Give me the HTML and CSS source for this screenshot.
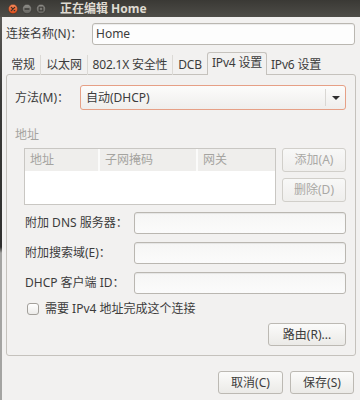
FILE: index.html
```html
<!DOCTYPE html>
<html lang="zh-CN">
<head>
<meta charset="utf-8">
<title>正在编辑 Home</title>
<link rel="stylesheet" href="styles.css">
</head>
<body>
<div class="window">
  <div class="titlebar">
    <div class="wbtns">
      <svg class="wbtn" viewBox="0 0 10 10" width="10" height="10">
        <defs>
          <linearGradient id="gc" x1="0" y1="0" x2="0" y2="1">
            <stop offset="0" stop-color="#f58a5c"/>
            <stop offset="1" stop-color="#dc4a18"/>
          </linearGradient>
          <linearGradient id="gg" x1="0" y1="0" x2="0" y2="1">
            <stop offset="0" stop-color="#8e8d88"/>
            <stop offset="1" stop-color="#65645f"/>
          </linearGradient>
        </defs>
        <circle cx="5" cy="5" r="4.7" fill="url(#gc)" stroke="#3a2a22" stroke-width="0.5"/>
        <path d="M3.3 3.3 L6.7 6.7 M6.7 3.3 L3.3 6.7" stroke="#3c2f28" stroke-width="1.2" stroke-linecap="round"/>
      </svg>
      <svg class="wbtn" viewBox="0 0 10 10" width="10" height="10">
        <circle cx="5" cy="5" r="4.7" fill="url(#gg)" stroke="#2c2b28" stroke-width="0.5"/>
        <path d="M3 5 H7" stroke="#3c3b37" stroke-width="1.3" stroke-linecap="round"/>
      </svg>
      <svg class="wbtn" viewBox="0 0 10 10" width="10" height="10">
        <circle cx="5" cy="5" r="4.7" fill="url(#gg)" stroke="#2c2b28" stroke-width="0.5"/>
        <rect x="3.2" y="3.2" width="3.6" height="3.6" fill="none" stroke="#3c3b37" stroke-width="1.1"/>
      </svg>
    </div>
    <div class="title">正在编辑 Home</div>
  </div>
  <div class="main">
    <div class="edge"></div>
    <div class="content">
      <div class="namerow">
        <span class="namelabel">连接名称(N)：</span>
        <div class="entry namebox">Home</div>
      </div>
      <div class="tabs">
        <div class="tab t-general">常规</div>
        <div class="tab t-ether">以太网</div>
        <div class="tab t-sec">802.1X 安全性</div>
        <div class="tab t-dcb">DCB</div>
        <div class="tab active t-v4">IPv4 设置</div>
        <div class="tab last t-v6">IPv6 设置</div>
      </div>
      <div class="panel">
        <div class="methodrow">
          <span class="methodlabel">方法(M)：</span>
          <div class="combo">
            <span class="combotext">自动(DHCP)</span>
            <span class="combosep"></span>
            <span class="comboarrow"><span class="arrow"></span></span>
          </div>
        </div>
        <div class="section">地址</div>
        <div class="addr">
          <div class="table">
            <div class="thead">
              <span class="th c1">地址</span>
              <span class="th c2">子网掩码</span>
              <span class="th c3">网关</span>
            </div>
          </div>
          <div class="addrbtns">
            <div class="btn disabled">添加(A)</div>
            <div class="btn disabled">删除(D)</div>
          </div>
        </div>
        <div class="form">
          <div class="frow"><span class="flabel">附加 DNS 服务器：</span><div class="entry fentry"></div></div>
          <div class="frow"><span class="flabel">附加搜索域(E)：</span><div class="entry fentry"></div></div>
          <div class="frow"><span class="flabel">DHCP 客户端 ID：</span><div class="entry fentry"></div></div>
        </div>
        <div class="checkrow">
          <span class="check"></span>
          <span class="checklabel">需要 IPv4 地址完成这个连接</span>
        </div>
        <div class="routerow">
          <div class="btn route">路由(R)...</div>
        </div>
      </div>
      <div class="actions">
        <div class="btn cancel">取消(C)</div>
        <div class="btn save">保存(S)</div>
      </div>
    </div>
  </div>
</div>
</body>
</html>
```
FILE: styles.css
```css
html, body {
  margin: 0;
  padding: 0;
}
body {
  background: #f2f1f0;
  font-family: "Noto Sans", "Noto Sans CJK SC", sans-serif;
  font-size: 12px;
  line-height: 16px;
  color: #3c3c3c;
}
.window {
  width: 360px;
  height: 400px;
  overflow: hidden;
  display: flex;
  flex-direction: column;
}
.titlebar {
  height: 17px;
  flex: none;
  display: flex;
  align-items: center;
  background: linear-gradient(#3a3935, #4e4d48);
}
.wbtns {
  display: flex;
  gap: 4px;
  padding-left: 8px;
}
.wbtn {
  display: block;
}
.title {
  margin-left: 14px;
  font-weight: bold;
  color: #dfdbd2;
  white-space: nowrap;
}
.main {
  flex: 1;
  display: flex;
}
.edge {
  width: 2px;
  flex: none;
  background: linear-gradient(to bottom, #5b5a57 0, #3a3a38 80px, #2f2f2e 230px, #a4a4a2 236px, #a4a4a2 100%);
}
.content {
  flex: 1;
  padding: 6px 4px 0 4px;
  display: flex;
  flex-direction: column;
}
.namerow {
  display: flex;
  align-items: center;
  height: 22px;
}
.namelabel {
  width: 86px;
  flex: none;
  white-space: nowrap;
}
.entry {
  height: 22px;
  box-sizing: border-box;
  border: 1px solid #bab7b1;
  border-radius: 3px;
  background: #fdfdfd;
  box-shadow: inset 0 1px 1px rgba(0, 0, 0, 0.07);
  padding: 0 3px;
  display: flex;
  align-items: center;
}
.namebox {
  flex: 1;
  margin-right: 1px;
  color: #3c3c3c;
}
.tabs {
  display: flex;
  align-items: flex-end;
  height: 23px;
  margin-top: 7px;
  position: relative;
  z-index: 1;
}
.tab {
  height: 20px;
  box-sizing: border-box;
  display: flex;
  align-items: center;
  justify-content: center;
  border-right: 1px solid #dcdad6;
  white-space: nowrap;
  letter-spacing: -0.2px;
}
.t-general { width: 35px; }
.t-ether { width: 47px; }
.t-sec { width: 85px; }
.t-dcb { width: 34px; border-right: none; }
.t-v4 { width: 60px; }
.t-v6 { width: 58px; }
.tab.last {
  border-right: none;
}
.tab.active {
  height: 23px;
  border: 1px solid #c5c2bd;
  border-bottom: none;
  border-radius: 3px 3px 0 0;
  background: #f2f1f0;
  padding-bottom: 2px;
}
.panel {
  margin-top: -1px;
  height: 282px;
  box-sizing: border-box;
  border: 1px solid #c5c2bd;
  border-radius: 3px;
  padding: 10px 9px 0 8px;
  display: flex;
  flex-direction: column;
}
.methodrow {
  display: flex;
  align-items: center;
  height: 25px;
}
.methodlabel {
  width: 65px;
  flex: none;
  white-space: nowrap;
}
.combo {
  flex: 1;
  height: 25px;
  box-sizing: border-box;
  border: 1px solid #e6a086;
  border-radius: 3px;
  background: linear-gradient(#fcfcfb, #efeeec);
  display: flex;
  align-items: center;
  padding-left: 5px;
}
.combotext {
  flex: 1;
}
.combosep {
  width: 1px;
  height: 17px;
  background: #d9d7d3;
}
.comboarrow {
  width: 19px;
  display: flex;
  justify-content: center;
  align-items: center;
}
.arrow {
  width: 0;
  height: 0;
  border-left: 4px solid transparent;
  border-right: 4px solid transparent;
  border-top: 4px solid #2e2e2e;
  margin-left: 1px;
}
.section {
  margin-top: 17px;
  color: #a5a4a0;
}
.addr {
  display: flex;
  gap: 6px;
  margin-top: 5px;
}
.table {
  width: 252px;
  height: 57px;
  margin-left: 9px;
  box-sizing: border-box;
  border: 1px solid #c9c7c3;
  background: #ffffff;
}
.thead {
  display: flex;
  height: 22px;
  background: #efeeec;
}
.th {
  display: flex;
  align-items: center;
  padding-left: 5px;
  box-sizing: border-box;
  color: #a5a4a0;
  border-right: 2px solid #fbfbfa;
  white-space: nowrap;
}
.th.c1 { width: 75px; }
.th.c2 { width: 98px; }
.th.c3 { flex: 1; border-right: none; }
.addrbtns {
  display: flex;
  flex-direction: column;
  gap: 6px;
  width: 64px;
}
.btn {
  height: 24px;
  box-sizing: border-box;
  border: 1px solid #bcb9b3;
  border-radius: 3px;
  background: linear-gradient(#fbfbfa, #ebeae7);
  display: flex;
  align-items: center;
  justify-content: center;
  white-space: nowrap;
  color: #3c3c3c;
}
.btn.disabled {
  color: #a9a8a4;
  border-color: #d1cfca;
  background: linear-gradient(#f8f8f7, #efeeec);
}
.form {
  margin-top: 7px;
  display: flex;
  flex-direction: column;
  gap: 8px;
}
.frow {
  display: flex;
  align-items: center;
  height: 22px;
}
.flabel {
  margin-left: 10px;
  width: 109px;
  flex: none;
  white-space: nowrap;
}
.fentry {
  flex: 1;
  background: linear-gradient(#f6f6f5, #fbfbfb);
}
.checkrow {
  display: flex;
  align-items: center;
  height: 16px;
  margin-top: 7px;
  gap: 6px;
}
.check {
  width: 12px;
  height: 12px;
  box-sizing: border-box;
  margin-left: 12px;
  border: 1px solid #a3a09b;
  border-radius: 3px;
  background: linear-gradient(#ffffff, #ecebe9);
}
.checklabel {
  white-space: nowrap;
}
.routerow {
  display: flex;
  justify-content: flex-end;
  margin-top: 6px;
}
.route {
  width: 78px;
  height: 23px;
}
.actions {
  display: flex;
  justify-content: flex-end;
  gap: 7px;
  margin-top: 15px;
  padding-right: 2px;
}
.actions .btn {
  height: 23px;
}
.cancel { width: 65px; }
.save { width: 64px; }
```
